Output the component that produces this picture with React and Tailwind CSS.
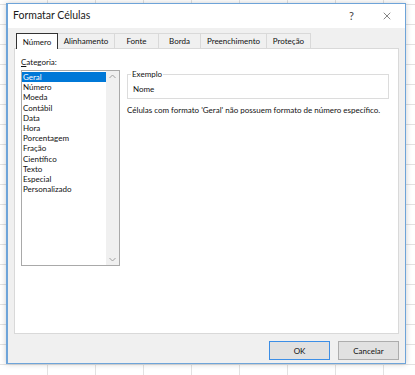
import { X } from "lucide-react";

const font = { fontFamily: 'Lato, "Noto Sans", sans-serif' };

const tabs = ["Número", "Alinhamento", "Fonte", "Borda", "Preenchimento", "Proteção"];
const tabWidths = ["w-[42px]", "w-[58px]", "w-[45px]", "w-[43px]", "w-[67px]", "w-[45px]"];

const categorias = [
  "Geral",
  "Número",
  "Moeda",
  "Contábil",
  "Data",
  "Hora",
  "Porcentagem",
  "Fração",
  "Científico",
  "Texto",
  "Especial",
  "Personalizado",
];

export default function App() {
  return (
    <div
      className="relative w-[415px] h-[375px] overflow-hidden bg-white text-[#111] text-[8px] bg-[linear-gradient(#e2e2e2_1px,transparent_1px),linear-gradient(90deg,#e2e2e2_1px,transparent_1px)] bg-[size:48px_20px] bg-[position:-1px_4px]"
      style={font}
    >
      {/* dialog window */}
      <div className="absolute left-[6px] top-[3px] w-[400px] h-[361px] flex flex-col bg-[#f0f0f0] border border-[#6ea4d9] border-l-2 shadow-[0_0_6px_rgba(0,0,0,0.2)]">
        <div className="h-[24px] shrink-0 bg-white flex items-center pl-[5px]">
          <span className="text-[10.5px] text-[#1a1a1a]">Formatar Células</span>
          <span className="ml-auto text-[11px] text-[#444] mr-[27px]">?</span>
          <X className="w-[12px] h-[12px] mr-[12px] text-[#333]" strokeWidth={1.2} />
        </div>

        <div className="flex flex-col px-[6px] pt-[5px]">
          <div className="flex pl-[2px] h-[15px]">
            {tabs.map((t, i) => (
              <div
                key={t}
                className={`${tabWidths[i]} flex items-center justify-center border border-b-0 ${
                  i === 0
                    ? "bg-white border-[#333] relative z-10 h-[16px]"
                    : "bg-[#f0f0f0] border-[#d9d9d9] -ml-px"
                }`}
              >
                {t}
              </div>
            ))}
          </div>

          <div className="h-[286px] bg-white border border-[#d9d9d9] flex gap-[7px] pl-[6px] pr-[5px]">
            <div className="flex flex-col w-[99px]">
              <div className="h-[21px] flex items-end pb-[2px]">
                <span>
                  <span className="underline">C</span>ategoria:
                </span>
              </div>
              <div className="h-[196px] border border-[#a9a9a9] flex">
                <div className="flex-1 flex flex-col leading-[10.2px] pt-px">
                  {categorias.map((c, i) => (
                    <div
                      key={c}
                      className={`pl-[1px] ${i === 0 ? "bg-[#0078d7] text-white" : ""}`}
                    >
                      {c}
                    </div>
                  ))}
                </div>
                <div className="w-[13px] bg-[#f0f0f0] flex flex-col justify-between items-center py-[3px]">
                  <svg width="7" height="5" viewBox="0 0 7 5">
                    <path d="M0.5 4 L3.5 1 L6.5 4" fill="none" stroke="#a0a0a0" strokeWidth="1" />
                  </svg>
                  <svg width="7" height="5" viewBox="0 0 7 5">
                    <path d="M0.5 1 L3.5 4 L6.5 1" fill="none" stroke="#a0a0a0" strokeWidth="1" />
                  </svg>
                </div>
              </div>
            </div>

            <div className="flex-1 flex flex-col pt-[25px]">
              <div className="relative h-[25px] border border-[#dcdcdc] mr-[4px] flex items-center pl-[5px] pt-[4px]">
                <span className="absolute -top-[6px] left-[3px] bg-white px-[1px] leading-[10px]">
                  Exemplo
                </span>
                Nome
              </div>
              <div className="mt-[5px] whitespace-nowrap">
                Células com formato 'Geral' não possuem formato de número específico.
              </div>
            </div>
          </div>
        </div>

        <div className="flex justify-end gap-[8px] pr-[6px] pt-[7px]">
          <button className="w-[61px] h-[19px] bg-[#e1e1e1] border border-[#3c8ee6] text-[8px]">
            OK
          </button>
          <button className="w-[61px] h-[19px] bg-[#e1e1e1] border border-[#adadad] text-[8px]">
            Cancelar
          </button>
        </div>
      </div>
    </div>
  );
}
